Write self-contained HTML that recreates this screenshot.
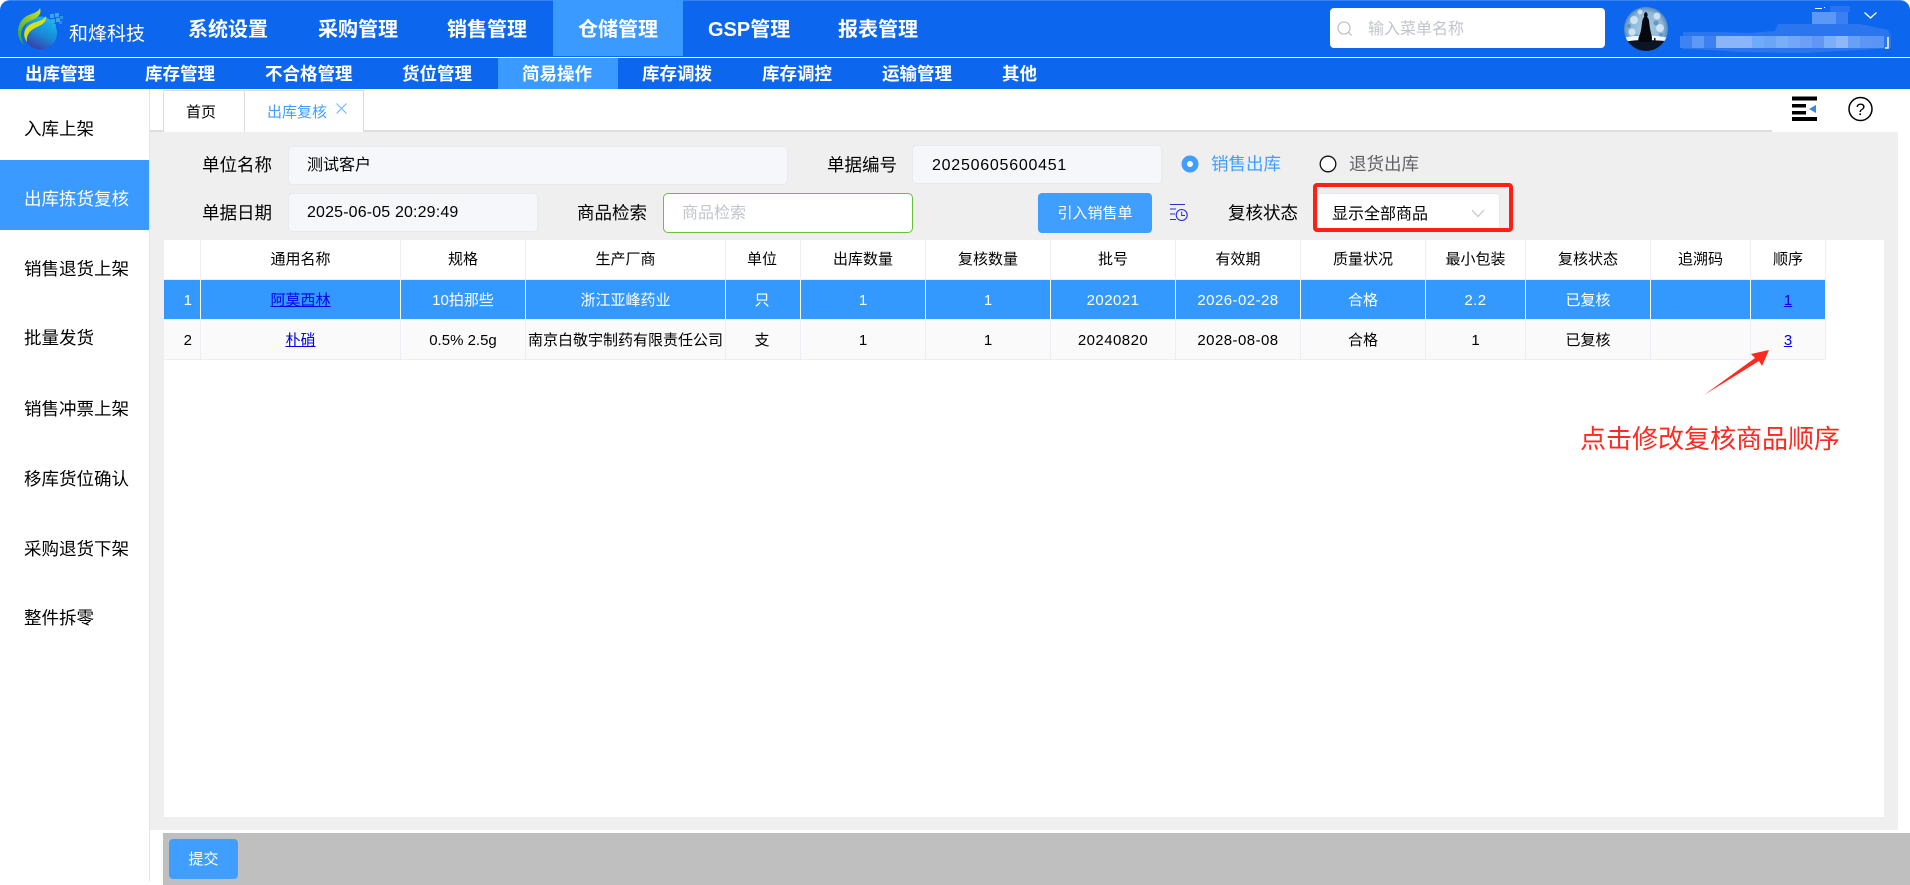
<!DOCTYPE html>
<html lang="zh"><head><meta charset="utf-8"><title>出库复核</title>
<style>
html,body{margin:0;padding:0;width:1910px;height:885px;overflow:hidden;background:#fff}
body{position:relative;font-family:"Liberation Sans","Noto Sans CJK SC",sans-serif;color:#000}
div,a,span.t{position:absolute;white-space:nowrap;box-sizing:border-box}
.b{font-weight:700}
.top{top:16px;height:28px;line-height:28px;font-size:20px;font-weight:700;color:#fff}
.sub{top:62px;height:24px;line-height:24px;font-size:17.5px;font-weight:700;color:#fff}
.side{left:24px;height:26px;line-height:26px;font-size:17.5px;color:#000}
.lb{height:26px;line-height:26px;font-size:17.5px;color:#000}
.inp{background:#f5f7fa;border:1px solid #e8eaf0;border-radius:5px;height:39px}
.val{height:24px;line-height:24px;font-size:16px;color:#000}
.cell{height:39px;line-height:39px;font-size:15px;text-align:center;color:#000;overflow:hidden}
.w{color:#fff}
.n{letter-spacing:.45px}
.cell a{position:static;color:#0000ee;text-decoration:underline}
.vl{width:1px;top:240px;height:120px;background:#ebeef5}
</style></head><body>

<!-- header -->
<div style="left:0;top:0;width:1910px;height:89px;background:#0d67ee;border-radius:10px 10px 0 0;border-top:1px solid #3a84f2"></div>
<div style="left:0;top:57px;width:1910px;height:1px;background:#fff"></div>
<div style="left:553px;top:0;width:130px;height:56px;background:#3a9aff"></div>
<div style="left:498px;top:58px;width:120px;height:31px;background:#3a9aff"></div>

<svg style="position:absolute;left:15px;top:5px" width="52" height="46" viewBox="0 0 52 46">
<defs>
<linearGradient id="g1" x1=".8" y1="0" x2=".3" y2="1"><stop offset="0" stop-color="#12bdf0"/><stop offset=".55" stop-color="#1b86d8"/><stop offset="1" stop-color="#3a3aa6"/></linearGradient>
<linearGradient id="g2" x1=".8" y1="0" x2=".2" y2="1"><stop offset="0" stop-color="#c4dc20"/><stop offset="1" stop-color="#2fa543"/></linearGradient>
</defs>
<circle cx="25.500" cy="28" r="16.500" fill="url(#g1)"/>
<path d="M25 3C27 9 23 13 15 16 7 20 3 28 9 40 1 33 1 20 9 13 15 8 22 9 25 3Z" fill="url(#g2)"/>
<path d="M31 11C32 18 26 20 20 23 14 26 11 31 12 37 7 30 9 23 16 19 22 16 28 16 31 11Z" fill="#d6e016"/>
<g fill="#3ba5ea"><rect x="35" y="9" width="4" height="4"/><rect x="40" y="8" width="4" height="4"/><rect x="36" y="14" width="4" height="4"/><rect x="41" y="13" width="4" height="4"/><rect x="45" y="11" width="3" height="3" opacity=".7"/><rect x="31" y="14" width="3" height="3" opacity=".8"/><rect x="38" y="19" width="3" height="3" opacity=".7"/><rect x="44" y="16" width="3" height="3" opacity=".6"/></g>
</svg>
<div style="left:69px;top:21px;height:28px;line-height:28px;font-size:19px;color:#fff">和烽科技</div>

<div class="top" style="left:188px">系统设置</div>
<div class="top" style="left:318px">采购管理</div>
<div class="top" style="left:447px">销售管理</div>
<div class="top" style="left:578px">仓储管理</div>
<div class="top" style="left:708px">GSP管理</div>
<div class="top" style="left:838px">报表管理</div>

<div class="sub" style="left:25px">出库管理</div>
<div class="sub" style="left:145px">库存管理</div>
<div class="sub" style="left:265px">不合格管理</div>
<div class="sub" style="left:402px">货位管理</div>
<div class="sub" style="left:522px">简易操作</div>
<div class="sub" style="left:642px">库存调拨</div>
<div class="sub" style="left:762px">库存调控</div>
<div class="sub" style="left:882px">运输管理</div>
<div class="sub" style="left:1002px">其他</div>

<!-- search -->
<div style="left:1330px;top:8px;width:275px;height:40px;background:#fff;border-radius:4px"></div>
<svg style="position:absolute;left:1336px;top:20px" width="18" height="18" viewBox="0 0 18 18" fill="none" stroke="#c0c4cc" stroke-width="1.3"><circle cx="8" cy="8" r="6"/><path d="M12.5 12.5L15.5 15.5"/></svg>
<div style="left:1368px;top:18px;height:24px;line-height:24px;font-size:16px;color:#c0c4cc">输入菜单名称</div>

<!-- avatar & blurred user info -->
<svg style="position:absolute;left:1620px;top:0" width="290" height="57" viewBox="1620 0 290 57">
<defs>
<radialGradient id="mo" cx=".5" cy=".5" r=".55"><stop offset="0" stop-color="#a9cbe6"/><stop offset=".7" stop-color="#8db6d9"/><stop offset="1" stop-color="#3f78ad"/></radialGradient>
<clipPath id="ac"><circle cx="1646" cy="29" r="22"/></clipPath>
</defs>
<g clip-path="url(#ac)">
<rect x="1624" y="7" width="44" height="44" fill="url(#mo)"/>
<g fill="#e4f0f9" opacity=".75"><circle cx="1634" cy="20" r="4"/><circle cx="1657" cy="16" r="3.500"/><circle cx="1660" cy="28" r="4"/><circle cx="1632" cy="32" r="3.500"/><circle cx="1640" cy="12" r="2.500"/></g>
<g fill="#4f86b8" opacity=".7"><circle cx="1656" cy="23" r="2.500"/><circle cx="1629" cy="26" r="2"/><circle cx="1637" cy="37" r="2.500"/><circle cx="1661" cy="35" r="2"/></g>
<path d="M1622 38Q1646 33 1670 38V42Q1646 38 1622 42Z" fill="#f0f6fb"/>
<path d="M1622 42Q1646 38 1670 42V53H1622Z" fill="#0b1526"/>
<path d="M1645 12c2 0 3 2 2.500 4l-.5 1c1.500 1 2 3 2.300 6 .4 4 1.200 8 2.200 12 .7 2.500 .5 5 0 7h-13c-.7-3 .3-5 1.500-8 1-3 1.500-7 2-11 .3-3 1-5 2.300-6-.7-2 .2-5 1.700-5Z" fill="#05080e"/>
<rect x="1654" y="38" width="1.500" height="5" fill="#0a0f18"/>
</g>
<path d="M1683 32H1718L1748 33 1775 31 1778 24H1860L1888 30 1891 36V48L1860 50 1805 53 1740 52 1710 50 1683 49Z" fill="#2b76ef"/>
<rect x="1812" y="12" width="24" height="12" fill="#5c98f5"/><rect x="1836" y="12" width="12" height="12" fill="#3a80f2"/><rect x="1830" y="6" width="20" height="6" fill="#2a73f0"/>
<rect x="1680" y="36" width="12" height="12" fill="#3d83f2"/><rect x="1692" y="36" width="12" height="12" fill="#5e9af5"/><rect x="1704" y="36" width="12" height="12" fill="#3c80f2"/><rect x="1716" y="36" width="36" height="12" fill="#8ab6f9"/><rect x="1752" y="36" width="12" height="12" fill="#6fabf7"/><rect x="1764" y="36" width="12" height="12" fill="#6ba5f7"/><rect x="1776" y="36" width="12" height="12" fill="#79aef8"/><rect x="1788" y="36" width="12" height="12" fill="#73a6f7"/><rect x="1800" y="36" width="12" height="12" fill="#6c9ff6"/><rect x="1812" y="36" width="12" height="12" fill="#6196f5"/><rect x="1824" y="36" width="12" height="12" fill="#7bb0f8"/><rect x="1836" y="36" width="12" height="12" fill="#8fb8f9"/><rect x="1848" y="36" width="12" height="12" fill="#68a0f6"/><rect x="1860" y="36" width="12" height="12" fill="#5d97f5"/><rect x="1872" y="36" width="12" height="12" fill="#5a95f5"/>
<path d="M1888 37V48H1885" fill="none" stroke="#fff" stroke-width="1.500"/>
<path d="M1815 8.500H1822M1824 7.500H1825" fill="none" stroke="#fff" stroke-width="1"/>
<path d="M1864.500 12.500L1870.500 18 1876.500 12.500" fill="none" stroke="#fff" stroke-width="1.300"/>
</svg>

<!-- sidebar -->
<div style="left:0;top:89px;width:150px;height:792px;background:#fff;border-right:1px solid #e4e4e4"></div>
<div style="left:0;top:160px;width:149px;height:70px;background:#3a9aff"></div>
<div class="side" style="top:116px">入库上架</div>
<div class="side" style="top:186px;color:#fff">出库拣货复核</div>
<div class="side" style="top:256px">销售退货上架</div>
<div class="side" style="top:325px">批量发货</div>
<div class="side" style="top:396px">销售冲票上架</div>
<div class="side" style="top:466px">移库货位确认</div>
<div class="side" style="top:536px">采购退货下架</div>
<div class="side" style="top:605px">整件拆零</div>

<!-- tabs -->
<div style="left:150px;top:130px;width:1622px;height:2px;background:#dedede"></div>
<div style="left:163px;top:90px;width:82px;height:42px;background:#fff;border:1px solid #ddd;border-bottom:0"></div>
<div style="left:244px;top:90px;width:120px;height:43px;background:#fff;border:1px solid #ddd;border-bottom:0"></div>
<div style="left:186px;top:102px;height:22px;line-height:22px;font-size:15px">首页</div>
<div style="left:267px;top:102px;height:22px;line-height:22px;font-size:15px;color:#409eff">出库复核</div>
<svg style="position:absolute;left:336px;top:103px" width="11" height="11" viewBox="0 0 11 11" stroke="#6fb1ff" stroke-width="1" fill="none"><path d="M.5.5L10.500 10.500M10.500.5L.5 10.500"/></svg>
<!-- right icons -->
<svg style="position:absolute;left:1790px;top:94px" width="30" height="30" viewBox="0 0 30 30">
<rect x="2" y="2.500" width="25" height="4" fill="#000"/><rect x="2" y="10" width="14" height="3.500" fill="#000"/><rect x="2" y="17" width="14" height="3.500" fill="#000"/><rect x="2" y="23" width="25" height="4" fill="#000"/>
<path d="M26 11V19L19 15Z" fill="#3f86d8"/></svg>
<svg style="position:absolute;left:1846px;top:94px" width="30" height="30" viewBox="0 0 30 30" fill="none"><circle cx="14.500" cy="15" r="11.500" stroke="#000" stroke-width="1.500"/><text x="14.500" y="21" text-anchor="middle" font-family="Liberation Sans, sans-serif" font-size="17" fill="#000">?</text></svg>

<!-- gray content -->
<div style="left:150px;top:132px;width:1748px;height:698px;background:#efefef"></div>
<div style="left:164px;top:240px;width:1720px;height:577px;background:#fff"></div>

<!-- form -->
<div class="lb" style="left:202px;top:152px">单位名称</div>
<div class="inp" style="left:288px;top:146px;width:500px"></div>
<div class="val" style="left:307px;top:154px">测试客户</div>
<div class="lb" style="left:827px;top:152px">单据编号</div>
<div class="inp" style="left:912px;top:145px;width:250px"></div>
<div class="val" style="left:932px;top:154px;letter-spacing:.75px">20250605600451</div>
<svg style="position:absolute;left:1181px;top:155px" width="18" height="18" viewBox="0 0 18 18"><circle cx="9" cy="9" r="8.500" fill="#409eff"/><circle cx="9" cy="9" r="3" fill="#fff"/></svg>
<div class="lb" style="left:1211px;top:151px;color:#409eff">销售出库</div>
<svg style="position:absolute;left:1319px;top:155px" width="18" height="18" viewBox="0 0 18 18"><circle cx="9" cy="9" r="7.800" fill="#fff" stroke="#111" stroke-width="1.300"/></svg>
<div class="lb" style="left:1349px;top:151px;color:#606266">退货出库</div>

<div class="lb" style="left:202px;top:200px">单据日期</div>
<div class="inp" style="left:288px;top:193px;width:250px"></div>
<div class="val" style="left:307px;top:201px;letter-spacing:.15px">2025-06-05 20:29:49</div>
<div class="lb" style="left:577px;top:200px">商品检索</div>
<div style="left:663px;top:193px;width:250px;height:40px;background:#fff;border:1px solid #67c23a;border-radius:5px"></div>
<div class="val" style="left:682px;top:202px;color:#c0c4cc">商品检索</div>
<div style="left:1038px;top:193px;width:114px;height:40px;background:#409eff;border-radius:4px;color:#fff;font-size:15px;line-height:41px;text-align:center">引入销售单</div>
<svg style="position:absolute;left:1170px;top:204px" width="19" height="18" viewBox="0 0 19 18" fill="none" stroke="#2a2ae2" stroke-width="1.100"><path d="M0 .5H15M0 5H6M0 10H5M0 15.500H6"/><circle cx="11.700" cy="11" r="5.500"/><path d="M11.700 7.500V11.500H15" stroke-width="1"/></svg>
<div class="lb" style="left:1228px;top:200px">复核状态</div>
<div style="left:1317px;top:193px;width:183px;height:38px;background:#fff;border:1px solid #e4e7ed;border-radius:4px"></div>
<div class="val" style="left:1332px;top:203px">显示全部商品</div>
<svg style="position:absolute;left:1471px;top:209px" width="14" height="9" viewBox="0 0 14 9" fill="none" stroke="#c0c4cc" stroke-width="1.200"><path d="M1 1L7 7.500 13 1"/></svg>
<div style="left:1313px;top:183px;width:200px;height:49px;border:4px solid #ff2015;border-radius:4px"></div>

<!-- table -->
<div style="left:164px;top:280px;width:1662px;height:39px;background:#3399ff"></div>
<div style="left:164px;top:320px;width:1662px;height:39px;background:#fafafa"></div>
<div style="left:164px;top:279px;width:1662px;height:1px;background:#ebeef5"></div>
<div style="left:164px;top:319px;width:1662px;height:1px;background:#ebeef5"></div>
<div style="left:164px;top:359px;width:1662px;height:1px;background:#ebeef5"></div>

<div class="vl" style="left:200px"></div><div class="vl" style="left:400px"></div><div class="vl" style="left:525px"></div><div class="vl" style="left:725px"></div><div class="vl" style="left:800px"></div><div class="vl" style="left:925px"></div><div class="vl" style="left:1050px"></div><div class="vl" style="left:1175px"></div><div class="vl" style="left:1300px"></div><div class="vl" style="left:1425px"></div><div class="vl" style="left:1525px"></div><div class="vl" style="left:1650px"></div><div class="vl" style="left:1750px"></div><div class="vl" style="left:1825px"></div>
<div style="left:200px;top:280px;width:1px;height:39px;background:#fff"></div><div style="left:400px;top:280px;width:1px;height:39px;background:#fff"></div><div style="left:525px;top:280px;width:1px;height:39px;background:#fff"></div><div style="left:725px;top:280px;width:1px;height:39px;background:#fff"></div><div style="left:800px;top:280px;width:1px;height:39px;background:#fff"></div><div style="left:925px;top:280px;width:1px;height:39px;background:#fff"></div><div style="left:1050px;top:280px;width:1px;height:39px;background:#fff"></div><div style="left:1175px;top:280px;width:1px;height:39px;background:#fff"></div><div style="left:1300px;top:280px;width:1px;height:39px;background:#fff"></div><div style="left:1425px;top:280px;width:1px;height:39px;background:#fff"></div><div style="left:1525px;top:280px;width:1px;height:39px;background:#fff"></div><div style="left:1650px;top:280px;width:1px;height:39px;background:#fff"></div><div style="left:1750px;top:280px;width:1px;height:39px;background:#fff"></div><div style="left:1825px;top:280px;width:1px;height:39px;background:#fff"></div>

<!-- header row -->
<div class="cell" style="left:201px;top:240px;width:199px">通用名称</div>
<div class="cell" style="left:401px;top:240px;width:124px">规格</div>
<div class="cell" style="left:526px;top:240px;width:199px">生产厂商</div>
<div class="cell" style="left:725px;top:240px;width:74px">单位</div>
<div class="cell" style="left:801px;top:240px;width:124px">出库数量</div>
<div class="cell" style="left:926px;top:240px;width:124px">复核数量</div>
<div class="cell" style="left:1051px;top:240px;width:124px">批号</div>
<div class="cell" style="left:1176px;top:240px;width:124px">有效期</div>
<div class="cell" style="left:1301px;top:240px;width:124px">质量状况</div>
<div class="cell" style="left:1426px;top:240px;width:99px">最小包装</div>
<div class="cell" style="left:1526px;top:240px;width:124px">复核状态</div>
<div class="cell" style="left:1651px;top:240px;width:99px">追溯码</div>
<div class="cell" style="left:1751px;top:240px;width:74px">顺序</div>

<!-- row 1 -->
<div class="cell w" style="left:164px;top:281px;width:28px;text-align:right">1</div>
<div class="cell" style="left:201px;top:281px;width:199px"><a href="#">阿莫西林</a></div>
<div class="cell w" style="left:401px;top:281px;width:124px">10拍那些</div>
<div class="cell w" style="left:526px;top:281px;width:199px">浙江亚峰药业</div>
<div class="cell w" style="left:725px;top:281px;width:74px">只</div>
<div class="cell w" style="left:801px;top:281px;width:124px">1</div>
<div class="cell w" style="left:926px;top:281px;width:124px">1</div>
<div class="cell w n" style="left:1051px;top:281px;width:124px">202021</div>
<div class="cell w n" style="left:1176px;top:281px;width:124px">2026-02-28</div>
<div class="cell w" style="left:1301px;top:281px;width:124px">合格</div>
<div class="cell w n" style="left:1426px;top:281px;width:99px">2.2</div>
<div class="cell w" style="left:1526px;top:281px;width:124px">已复核</div>
<div class="cell" style="left:1751px;top:281px;width:74px"><a href="#">1</a></div>

<!-- row 2 -->
<div class="cell" style="left:164px;top:321px;width:28px;text-align:right">2</div>
<div class="cell" style="left:201px;top:321px;width:199px"><a href="#">朴硝</a></div>
<div class="cell" style="left:401px;top:321px;width:124px">0.5% 2.5g</div>
<div class="cell" style="left:526px;top:321px;width:199px">南京白敬宇制药有限责任公司</div>
<div class="cell" style="left:725px;top:321px;width:74px">支</div>
<div class="cell" style="left:801px;top:321px;width:124px">1</div>
<div class="cell" style="left:926px;top:321px;width:124px">1</div>
<div class="cell n" style="left:1051px;top:321px;width:124px">20240820</div>
<div class="cell n" style="left:1176px;top:321px;width:124px">2028-08-08</div>
<div class="cell" style="left:1301px;top:321px;width:124px">合格</div>
<div class="cell" style="left:1426px;top:321px;width:99px">1</div>
<div class="cell" style="left:1526px;top:321px;width:124px">已复核</div>
<div class="cell" style="left:1751px;top:321px;width:74px"><a href="#">3</a></div>

<!-- annotation -->
<svg style="position:absolute;left:1700px;top:345px" width="75" height="55" viewBox="1700 345 75 55"><path d="M1704 395L1755 358 1751 354 1769 350 1762 366 1759 361Z" fill="#ff2a1f"/></svg>
<div style="left:1580px;top:421px;height:36px;line-height:36px;font-size:26px;color:#ff2a1f">点击修改复核商品顺序</div>

<!-- bottom bar -->
<div style="left:163px;top:833px;width:1747px;height:52px;background:#bfbfbf"></div>
<div style="left:169px;top:839px;width:69px;height:40px;background:#409eff;border-radius:4px;color:#fff;font-size:15px;line-height:41px;text-align:center">提交</div>
</body></html>
